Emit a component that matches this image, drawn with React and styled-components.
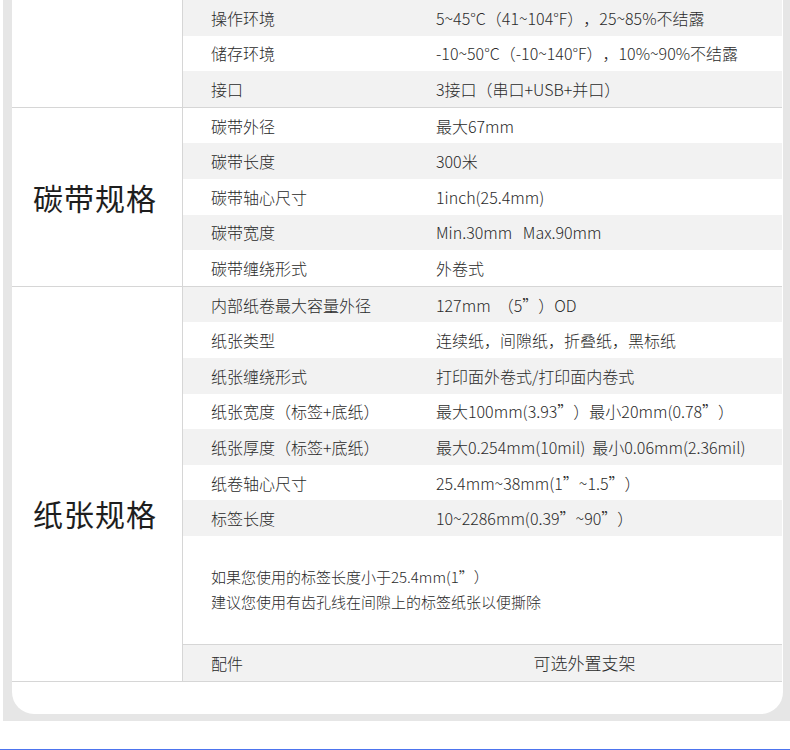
import React from "react";
import styled, { createGlobalStyle } from "styled-components";

const Global = createGlobalStyle`
  html, body { margin: 0; padding: 0; background: #fff; }
  body {
    font-family: "Noto Sans CJK SC", "Noto Sans", sans-serif;
    font-weight: 300;
    color: #2a2a2a;
    text-spacing-trim: space-all;
  }
`;

const Frame = styled.div`
  margin-left: 3px;
  padding: 0 7px 7px 9px;
  background: #e6e6e6;
`;

const Card = styled.div`
  background: #fff;
  border-radius: 0 0 22px 22px;
  padding-bottom: 32px;
`;

const Section = styled.div`
  display: grid;
  grid-template-columns: 171px 1fr;
  border-bottom: 1px solid #d6d6d6;
  margin-right: 1px;
`;

const Category = styled.div`
  border-right: 1px solid #d6d6d6;
  display: flex;
  align-items: center;
  justify-content: center;
  padding-top: ${p => p.$offset || 0}px;
  padding-right: 4px;
  font-size: 30px;
  font-weight: 400;
  letter-spacing: 1px;
  color: #1e1e1e;
`;

const Rows = styled.div`
  display: flex;
  flex-direction: column;
`;

const Row = styled.div`
  display: grid;
  grid-template-columns: ${p => (p.$center ? "204px 1fr" : "253px 1fr")};
  align-items: center;
  height: 35.6px;
  background: ${p => (p.$shade ? "#f2f2f2" : "#fff")};
  border-top: ${p => (p.$ruled ? "1px solid #d6d6d6" : "none")};
  font-size: 16px;
  line-height: 1;
`;

const Label = styled.span`
  padding-left: 28px;
  white-space: nowrap;
`;

const Value = styled.span`
  white-space: nowrap;
  text-align: ${p => (p.$center ? "center" : "left")};
  font-size: ${p => (p.$center ? 17 : 16)}px;
`;

const Note = styled.div`
  height: 108px;
  box-sizing: border-box;
  padding: 28px 0 0 28px;
  font-size: 15px;
  line-height: 25px;
`;

const Spacer = styled.div`
  height: 28px;
`;

const BlueRule = styled.div`
  height: 2px;
  background: #4d74ee;
`;

const env = [
  ["操作环境", "5~45°C（41~104°F），25~85%不结露"],
  ["储存环境", "-10~50°C（-10~140°F），10%~90%不结露"],
  ["接口", "3接口（串口+USB+并口）"],
];

const ribbon = [
  ["碳带外径", "最大67mm"],
  ["碳带长度", "300米"],
  ["碳带轴心尺寸", "1inch(25.4mm)"],
  ["碳带宽度", "Min.30mm\u00a0\u00a0\u00a0Max.90mm"],
  ["碳带缠绕形式", "外卷式"],
];

const paper = [
  ["内部纸卷最大容量外径", "127mm\u00a0\u00a0（5”）OD"],
  ["纸张类型", "连续纸，间隙纸，折叠纸，黑标纸"],
  ["纸张缠绕形式", "打印面外卷式/打印面内卷式"],
  ["纸张宽度（标签+底纸）", "最大100mm(3.93”）最小20mm(0.78”）"],
  ["纸张厚度（标签+底纸）", "最大0.254mm(10mil)\u00a0\u00a0最小0.06mm(2.36mil)"],
  ["纸卷轴心尺寸", "25.4mm~38mm(1”~1.5”）"],
  ["标签长度", "10~2286mm(0.39”~90”）"],
];

function SpecRows({ items, start }) {
  return items.map(([k, v], i) => (
    <Row key={k} $shade={(start + i) % 2 === 0}>
      <Label>{k}</Label>
      <Value>{v}</Value>
    </Row>
  ));
}

export default function App() {
  return (
    <>
      <Global />
      <Frame>
        <Card>
          <Section>
            <Category />
            <Rows>
              <SpecRows items={env} start={0} />
            </Rows>
          </Section>
          <Section>
            <Category>碳带规格</Category>
            <Rows>
              <SpecRows items={ribbon} start={1} />
            </Rows>
          </Section>
          <Section>
            <Category $offset={58}>纸张规格</Category>
            <Rows>
              <SpecRows items={paper} start={0} />
              <Note>
                如果您使用的标签长度小于25.4mm(1”）
                <br />
                建议您使用有齿孔线在间隙上的标签纸张以便撕除
              </Note>
              <Row $shade $ruled $center>
                <Label>配件</Label>
                <Value $center>可选外置支架</Value>
              </Row>
            </Rows>
          </Section>
        </Card>
      </Frame>
      <Spacer />
      <BlueRule />
    </>
  );
}
